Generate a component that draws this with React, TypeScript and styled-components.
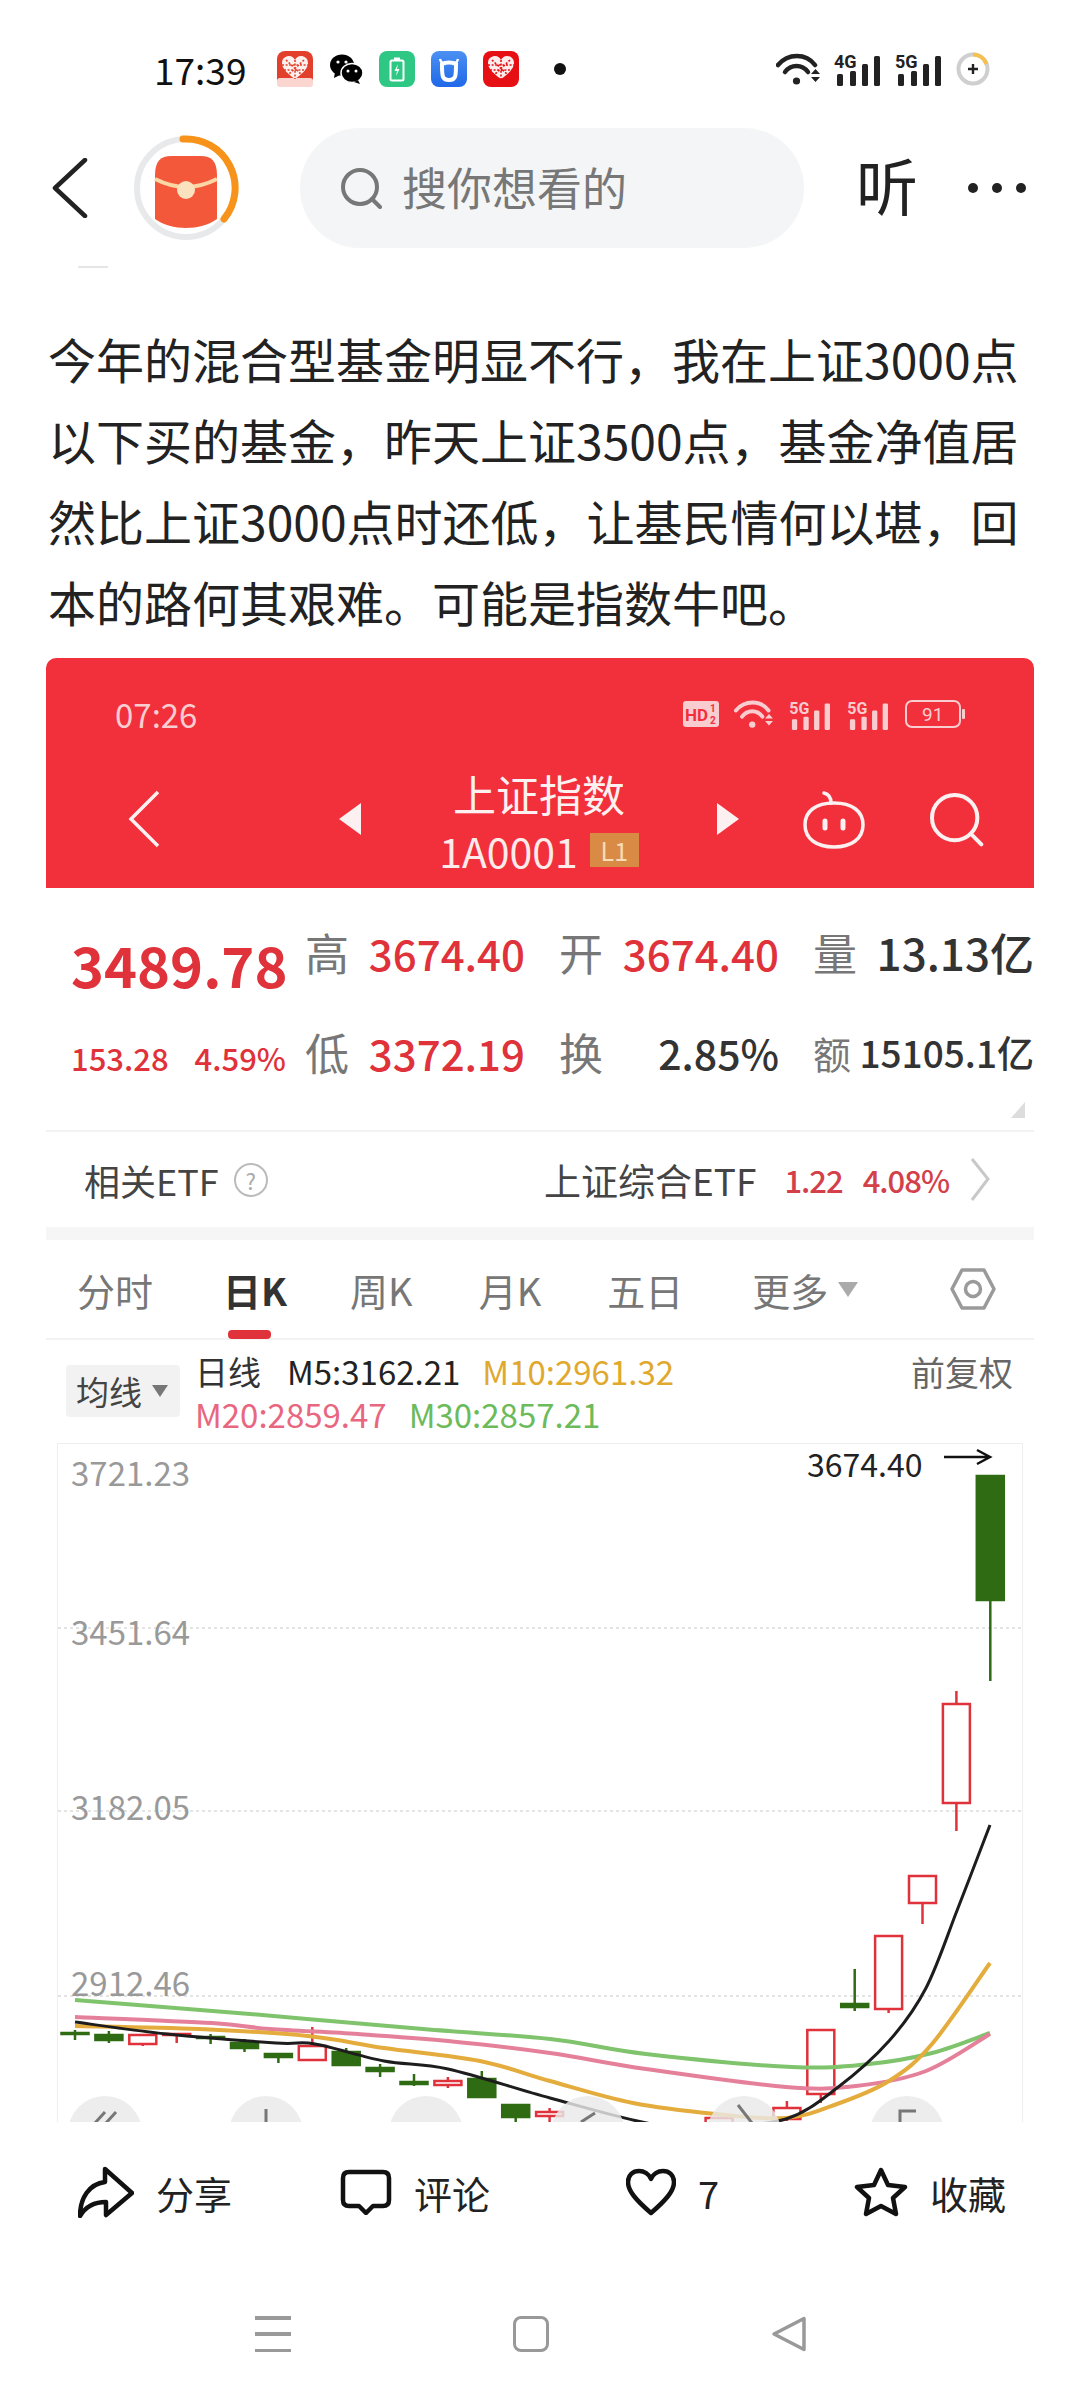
import React from 'react';
import styled, { createGlobalStyle } from 'styled-components';

const RED = '#e0323a';
const GREEN = '#2f6b13';

type Candle = { i: number; up: boolean; high: number; top: number; bottom: number; low: number };

// page-space y values, x comes from the candle index
const CANDLES: Candle[] = [
  { i: 0, up: false, high: 2029, top: 2032, bottom: 2033, low: 2039 },
  { i: 1, up: false, high: 2030, top: 2034, bottom: 2039, low: 2042 },
  { i: 2, up: true, high: 2034, top: 2034, bottom: 2043, low: 2045 },
  { i: 3, up: true, high: 2032, top: 2033, bottom: 2034, low: 2042 },
  { i: 4, up: false, high: 2033, top: 2036, bottom: 2037, low: 2043 },
  { i: 5, up: false, high: 2038, top: 2042, bottom: 2047, low: 2051 },
  { i: 6, up: false, high: 2053, top: 2053, bottom: 2056, low: 2062 },
  { i: 7, up: true, high: 2026, top: 2045, bottom: 2059, low: 2060 },
  { i: 8, up: false, high: 2047, top: 2051, bottom: 2064, low: 2064 },
  { i: 9, up: false, high: 2063, top: 2067, bottom: 2070, low: 2076 },
  { i: 10, up: false, high: 2073, top: 2081, bottom: 2083, low: 2085 },
  { i: 11, up: true, high: 2076, top: 2080, bottom: 2084, low: 2087 },
  { i: 12, up: false, high: 2070, top: 2078, bottom: 2096, low: 2096 },
  { i: 13, up: false, high: 2104, top: 2104, bottom: 2116, low: 2123 },
  { i: 14, up: true, high: 2107, top: 2111, bottom: 2115, low: 2123 },
  { i: 19, up: true, high: 2117, top: 2117, bottom: 2126, low: 2126 },
  { i: 21, up: true, high: 2100, top: 2107, bottom: 2118, low: 2120 },
  { i: 22, up: true, high: 2029, top: 2029, bottom: 2093, low: 2102 },
  { i: 23, up: false, high: 1968, top: 2003, bottom: 2006, low: 2010 },
  { i: 24, up: true, high: 1935, top: 1935, bottom: 2008, low: 2012 },
  { i: 25, up: true, high: 1875, top: 1875, bottom: 1902, low: 1923 },
  { i: 26, up: true, high: 1690, top: 1703, bottom: 1802, low: 1830 },
  { i: 27, up: false, high: 1475, top: 1475, bottom: 1599, low: 1680 },
];

const MA_LINES: { color: string; width: number; points: number[][] }[] = [
  { color: '#7fc36c', width: 4, points: [[75, 1999], [250, 2013], [423, 2028], [550, 2038], [646, 2053], [792, 2066], [869, 2063], [932, 2052], [990, 2032]] },
  { color: '#e5809a', width: 4, points: [[75, 2016], [212, 2022], [270, 2028], [358, 2033], [448, 2040], [550, 2052], [646, 2068], [786, 2086], [856, 2085], [926, 2070], [990, 2033]] },
  { color: '#e4ac3c', width: 4, points: [[75, 2025], [199, 2028], [308, 2035], [384, 2047], [480, 2060], [550, 2080], [633, 2102], [716, 2113], [786, 2117], [837, 2103], [889, 2080], [932, 2043], [990, 1962]] },
  { color: '#1d1d1d', width: 3, points: [[75, 2021], [167, 2033], [276, 2042], [315, 2043], [384, 2060], [448, 2068], [550, 2097], [652, 2123], [716, 2125], [786, 2118], [837, 2087], [889, 2040], [926, 1987], [958, 1907], [990, 1824]] },
];

const AXIS_LABELS = [
  { y: 1473, text: '3721.23' },
  { y: 1632, text: '3451.64' },
  { y: 1807, text: '3182.05' },
  { y: 1983, text: '2912.46' },
];

const TABS = ['分时', '日K', '周K', '月K', '五日'];

const smoothPath = (pts: number[][]) => {
  let d = `M${pts[0][0]} ${pts[0][1]}`;
  for (let i = 0; i < pts.length - 1; i++) {
    const p0 = pts[i - 1] || pts[i];
    const p1 = pts[i];
    const p2 = pts[i + 1];
    const p3 = pts[i + 2] || p2;
    const c1x = p1[0] + (p2[0] - p0[0]) / 6;
    const c1y = p1[1] + (p2[1] - p0[1]) / 6;
    const c2x = p2[0] - (p3[0] - p1[0]) / 6;
    const c2y = p2[1] - (p3[1] - p1[1]) / 6;
    d += ` C${c1x} ${c1y} ${c2x} ${c2y} ${p2[0]} ${p2[1]}`;
  }
  return d;
};

const HeartApp = ({ bg, label }: { bg: string; label?: boolean }) => (
  <svg width="36" height="36" viewBox="0 0 36 36">
    <rect width="36" height="36" rx="8" fill={bg} />
    {label && <rect y="27" width="36" height="9" rx="3" fill="#fbd5cf" />}
    <path d="M18 28 C8 21 5 16 5 12 C5 7 9 5 12 5 C15 5 17 7 18 9 C19 7 21 5 24 5 C27 5 31 7 31 12 C31 16 28 21 18 28Z" fill="#fff" opacity="0.92" />
    <path d="M18 9V28M9 9l16 15M27 9L11 24M5 14h26M7 19h22" stroke={bg} strokeWidth="1.6" strokeDasharray="2 1.6" fill="none" />
  </svg>
);

const WechatIcon = () => (
  <svg width="34" height="30" viewBox="0 0 34 30">
    <ellipse cx="13" cy="11" rx="12" ry="10.5" fill="#000" />
    <path d="M6 18l-1 6 6-3z" fill="#000" />
    <ellipse cx="23" cy="19" rx="11" ry="9.5" fill="#000" stroke="#fff" strokeWidth="1.5" />
    <path d="M29 26l2 4-6-2z" fill="#000" />
    <circle cx="9" cy="8" r="1.6" fill="#fff" />
    <circle cx="17" cy="8" r="1.6" fill="#fff" />
    <circle cx="19" cy="17" r="1.5" fill="#fff" />
    <circle cx="27" cy="17" r="1.5" fill="#fff" />
  </svg>
);

const BatteryApp = () => (
  <svg width="36" height="36" viewBox="0 0 36 36">
    <rect width="36" height="36" rx="8" fill="#2ec884" />
    <rect x="11.5" y="9.5" width="13" height="20" rx="1.5" fill="none" stroke="#fff" strokeWidth="2" />
    <rect x="15" y="6.5" width="6" height="3" fill="#fff" />
    <path d="M19 13l-3.5 7h2.5l-1 5 3.5-7h-2.5z" fill="#fff" />
  </svg>
);

const CowApp = () => (
  <svg width="36" height="36" viewBox="0 0 36 36">
    <defs>
      <linearGradient id="cow" x1="0" y1="0" x2="0" y2="1">
        <stop offset="0" stopColor="#4c90f2" />
        <stop offset="1" stopColor="#1f68e8" />
      </linearGradient>
    </defs>
    <rect width="36" height="36" rx="8" fill="url(#cow)" />
    <path d="M11 13c0 12 0 16 7 16s7-4 7-16c-3-2-11-2-14 0z" fill="none" stroke="#fff" strokeWidth="4" />
    <path d="M9 8c1 4 3 5 6 5M27 8c-1 4-3 5-6 5" fill="none" stroke="#fff" strokeWidth="2.4" />
  </svg>
);

const WifiIcon = ({ color, small }: { color: string; small?: boolean }) => (
  <svg width={small ? 40 : 45} height={small ? 30 : 34} viewBox="0 0 45 34">
    <path d="M2 13C12 1 30 1 39 13" fill="none" stroke={color} strokeWidth="4.5" strokeLinecap="round" />
    <path d="M9 20C15 12 26 12 32 20" fill="none" stroke={color} strokeWidth="4.5" strokeLinecap="round" />
    <circle cx="20.5" cy="29" r="3.6" fill={color} />
    <path d="M35 22h9l-4.5-5zM35 25h9l-4.5 5z" fill={color} />
  </svg>
);

const SignalIcon = ({ label, color, small }: { label: string; color: string; small?: boolean }) => (
  <svg width={small ? 43 : 48} height={small ? 31 : 35} viewBox="0 -3 48 35">
    <text x="0" y="14" fontSize="18" fontWeight="700" fill={color} fontFamily="Roboto, sans-serif">{label}</text>
    <rect x="3" y="20" width="6" height="12" rx="1.5" fill={color} />
    <rect x="16" y="17" width="6" height="15" rx="1.5" fill={color} />
    <rect x="28" y="10" width="6" height="22" rx="1.5" fill={color} />
    <rect x="40" y="2" width="6" height="30" rx="1.5" fill={color} />
  </svg>
);

const ChargeRing = () => (
  <svg width="34" height="34" viewBox="0 0 34 34">
    <circle cx="17" cy="17" r="14.5" fill="none" stroke="#cfcfcf" strokeWidth="4" />
    <path d="M17 2.5A14.5 14.5 0 0 1 30.5 12" fill="none" stroke="#f5c04e" strokeWidth="4" />
    <path d="M12 17h10M17 12v10" stroke="#222" strokeWidth="2.4" />
  </svg>
);

const RedPacket = () => (
  <svg width="106" height="106" viewBox="0 0 106 106">
    <circle cx="53" cy="53" r="49" fill="none" stroke="#e8e9eb" strokeWidth="6" />
    <path d="M50 4A49 49 0 0 1 91 84" fill="none" stroke="#f7931a" strokeWidth="7" strokeLinecap="round" />
    <path d="M22 40c0-14 6-19 16-19h30c10 0 16 5 16 19v44c-8 6-20 9-31 9s-23-3-31-9z" fill="#f4583a" />
    <path d="M22 44c10 5 20 8 31 8s21-3 31-8" fill="none" stroke="#fbd7a5" strokeWidth="4" />
    <circle cx="53" cy="55" r="9" fill="#f9e2bd" />
  </svg>
);

const SearchGlyph = ({ color, size, weight }: { color: string; size: number; weight: number }) => (
  <svg width={size} height={size} viewBox="0 0 42 42">
    <circle cx="20" cy="20" r="17" fill="none" stroke={color} strokeWidth={weight} />
    <path d="M32 32l8 8" stroke={color} strokeWidth={weight} strokeLinecap="round" />
  </svg>
);

const Triangle = ({ flip }: { flip?: boolean }) => (
  <svg width="22" height="32" viewBox="0 0 22 32">
    <path d={flip ? 'M0 0L22 16L0 32Z' : 'M22 0L0 16L22 32Z'} fill="#fdf0f0" />
  </svg>
);

const RobotIcon = () => (
  <svg width="66" height="60" viewBox="0 0 66 60" fill="none" stroke="#fdf0f0" strokeWidth="3.5">
    <path d="M33 14C15 14 4 22 4 36C4 50 16 58 33 58C50 58 62 50 62 36C62 22 51 14 33 14Z" />
    <path d="M30 14C30 8 27 5 23 4" strokeLinecap="round" />
    <path d="M24 32v7M42 32v7" strokeLinecap="round" strokeWidth="5" />
  </svg>
);

const HexIcon = () => (
  <svg width="46" height="44" viewBox="0 0 46 44" fill="none" stroke="#9a9a9a" strokeWidth="3.5">
    <path d="M12 3H34L44 22L34 41H12L2 22Z" strokeLinejoin="round" />
    <circle cx="23" cy="22" r="7.5" />
  </svg>
);

const ShareIcon = () => (
  <svg width="56" height="52" viewBox="0 0 56 52" fill="none" stroke="#111" strokeWidth="4.5" strokeLinejoin="round">
    <path d="M27 3L54 27L28 49V36C17 36 8 40 2 50C2 32 11 18 27 16Z" />
  </svg>
);

const CommentIcon = () => (
  <svg width="52" height="46" viewBox="0 0 52 46" fill="none" stroke="#111" strokeWidth="4.5" strokeLinejoin="round">
    <path d="M9 3H43Q49 3 49 9V31Q49 37 43 37H33L26 44L19 37H9Q3 37 3 31V9Q3 3 9 3Z" />
  </svg>
);

const HeartIcon = () => (
  <svg width="50" height="48" viewBox="0 0 50 48" fill="none" stroke="#111" strokeWidth="4.5" strokeLinejoin="round">
    <path d="M25 45C10 32 2 23 2 14C2 7 7 3 13 3C18 3 23 6 25 11C27 6 32 3 37 3C43 3 48 7 48 14C48 23 40 32 25 45Z" />
  </svg>
);

const StarIcon = () => (
  <svg width="54" height="50" viewBox="0 0 54 50" fill="none" stroke="#111" strokeWidth="4.5" strokeLinejoin="round">
    <path d="M27 3L34 18L51 20L39 31L42 47L27 39L12 47L15 31L3 20L20 18Z" />
  </svg>
);

const StockChart = () => (
  <svg width="964" height="679" viewBox="58 1443 964 679">
    {[1627, 1810, 1995].map((y) => (
      <line key={y} x1="58" x2="1022" y1={y} y2={y} stroke="#e4e4e4" strokeWidth="2" strokeDasharray="3 3" />
    ))}
    {CANDLES.map((c) => {
      const x = 75 + c.i * 33.9;
      const color = c.up ? RED : GREEN;
      return (
        <g key={c.i}>
          <line x1={x} x2={x} y1={c.high} y2={c.low} stroke={color} strokeWidth="2.5" />
          <rect
            x={x - 13.5}
            y={c.top}
            width="27"
            height={Math.max(c.bottom - c.top, 1)}
            fill={c.up ? '#fff' : color}
            stroke={color}
            strokeWidth="2.5"
          />
        </g>
      );
    })}
    {MA_LINES.map((l) => (
      <path key={l.color} d={smoothPath(l.points)} fill="none" stroke={l.color} strokeWidth={l.width} />
    ))}
    {[105, 266, 426, 588, 744, 907].map((x) => (
      <circle key={x} cx={x} cy="2132" r="37" fill="#e9e9e9" fillOpacity="0.82" />
    ))}
    <path d="M95 2122l10-11M106 2122l10-11M266 2108v14M581 2121l14-9M900 2122v-12h16" fill="none" stroke="#777" strokeWidth="3" />
    <path d="M738 2104l14 18" fill="none" stroke="#777" strokeWidth="3" />
    {AXIS_LABELS.map((a) => (
      <AxisText key={a.text} x="71" y={a.y + 12}>{a.text}</AxisText>
    ))}
    <path d="M944 1456H989M977 1449L990 1456L977 1463" fill="none" stroke="#111" strokeWidth="2.5" />
  </svg>
);

export default function App() {
  return (
    <>
      <GlobalStyle />
      <Screen>
        <StatusBar>
          <Clock>17:39</Clock>
          <AppIcons>
            <HeartApp bg="#e2402c" label />
            <WechatIcon />
            <BatteryApp />
            <CowApp />
            <HeartApp bg="#e60f14" />
            <NoticeDot />
          </AppIcons>
          <SystemIcons>
            <WifiIcon color="#222" />
            <SignalIcon label="4G" color="#222" />
            <SignalIcon label="5G" color="#222" />
            <ChargeRing />
          </SystemIcons>
        </StatusBar>

        <TopNav>
          <BackButton>
            <svg width="36" height="60" viewBox="0 0 36 60">
              <path d="M33 2L3 30L33 58" fill="none" stroke="#222" strokeWidth="4.5" strokeLinecap="round" strokeLinejoin="round" />
            </svg>
          </BackButton>
          <RedPacket />
          <SearchPill>
            <SearchGlyph color="#777" size={42} weight={4} />
            <SearchHint>搜你想看的</SearchHint>
          </SearchPill>
          <ListenLabel>听</ListenLabel>
          <MoreDots>
            <i />
            <i />
            <i />
          </MoreDots>
        </TopNav>

        <ScrollHint />

        <PostText>
          今年的混合型基金明显不行，我在上证3000点以下买的基金，昨天上证3500点，基金净值居然比上证3000点时还低，让基民情何以堪，回本的路何其艰难。可能是指数牛吧。
        </PostText>

        <PostImage>
          <RedHeader>
            <RedStatus>
              <RedClock>07:26</RedClock>
              <RedStatusIcons>
                <svg width="36" height="26" viewBox="0 0 36 26">
                  <rect width="36" height="26" rx="3" fill="#f9cdd0" />
                  <text x="2" y="20" fontSize="17" fontWeight="700" fill="#f1303c" fontFamily="Roboto, sans-serif">HD</text>
                  <text x="27" y="11" fontSize="10" fontWeight="700" fill="#f1303c" fontFamily="Roboto, sans-serif">1</text>
                  <text x="27" y="23" fontSize="10" fontWeight="700" fill="#f1303c" fontFamily="Roboto, sans-serif">2</text>
                </svg>
                <WifiIcon color="#f9cdd0" small />
                <SignalIcon label="5G" color="#f9cdd0" small />
                <SignalIcon label="5G" color="#f9cdd0" small />
                <svg width="60" height="28" viewBox="0 0 60 28">
                  <rect x="1" y="1" width="54" height="26" rx="6" fill="none" stroke="#f9cdd0" strokeWidth="2" />
                  <text x="17" y="21" fontSize="19" fill="#f9cdd0" fontFamily="Roboto, sans-serif">91</text>
                  <rect x="57" y="9" width="3" height="10" rx="1" fill="#f9cdd0" />
                </svg>
              </RedStatusIcons>
            </RedStatus>
            <RedNav>
              <RedBack>
                <svg width="32" height="58" viewBox="0 0 32 58">
                  <path d="M30 2L3 29L30 56" fill="none" stroke="#fdf0f0" strokeWidth="3.5" />
                </svg>
              </RedBack>
              <Ticker>
                <Triangle />
                <TickerName>
                  <TickerTitle>上证指数</TickerTitle>
                  <TickerCode>
                    1A0001
                    <LevelBadge>L1</LevelBadge>
                  </TickerCode>
                </TickerName>
                <Triangle flip />
              </Ticker>
              <RobotSlot>
                <RobotIcon />
              </RobotSlot>
              <SearchSlot>
                <SearchGlyph color="#fdf0f0" size={56} weight={3} />
              </SearchSlot>
            </RedNav>
          </RedHeader>

          <StatGrid>
            <PriceCell>
              <Price>3489.78</Price>
            </PriceCell>
            <StatCell>
              <StatLabel>高</StatLabel>
              <StatValue $size={42} $tone={RED}>3674.40</StatValue>
            </StatCell>
            <StatCell>
              <StatLabel>开</StatLabel>
              <StatValue $size={42} $tone={RED}>3674.40</StatValue>
            </StatCell>
            <StatCell>
              <StatLabel>量</StatLabel>
              <StatValue $size={44} $tone="#333">13.13亿</StatValue>
            </StatCell>
            <ChangeCell>
              <Change>153.28</Change>
              <Change>4.59%</Change>
            </ChangeCell>
            <StatCell>
              <StatLabel>低</StatLabel>
              <StatValue $size={42} $tone={RED}>3372.19</StatValue>
            </StatCell>
            <StatCell>
              <StatLabel>换</StatLabel>
              <StatValue $size={41} $tone="#333">2.85%</StatValue>
            </StatCell>
            <StatCell>
              <StatLabel $small>额</StatLabel>
              <StatValue $size={37} $tone="#333">15105.1亿</StatValue>
            </StatCell>
            <CornerMark />
          </StatGrid>

          <EtfRow>
            <EtfName>相关ETF</EtfName>
            <HelpMark>?</HelpMark>
            <EtfLink>上证综合ETF</EtfLink>
            <EtfQuote>1.22</EtfQuote>
            <EtfQuote>4.08%</EtfQuote>
            <svg width="20" height="45" viewBox="0 0 20 45">
              <path d="M2 2L18 22L2 43" fill="none" stroke="#c8c8c8" strokeWidth="3" />
            </svg>
          </EtfRow>

          <TabBar>
            {TABS.map((tab) => (
              <Tab key={tab} $active={tab === '日K'}>{tab}</Tab>
            ))}
            <Tab>
              更多
              <TabCaret />
            </Tab>
            <HexSlot>
              <HexIcon />
            </HexSlot>
          </TabBar>

          <LegendRow>
            <MaSelect>
              均线
              <SelectCaret />
            </MaSelect>
            <LegendLines>
              <LegendLine>
                <LegendTitle>日线</LegendTitle>
                <MaValue $tone="#222">M5:3162.21</MaValue>
                <MaValue $tone="#e0a92e">M10:2961.32</MaValue>
              </LegendLine>
              <LegendLine>
                <MaValue $tone="#e8677f">M20:2859.47</MaValue>
                <MaValue $tone="#6cbb5a">M30:2857.21</MaValue>
              </LegendLine>
            </LegendLines>
            <AdjustLabel>前复权</AdjustLabel>
          </LegendRow>

          <ChartFrame>
            <LastPrice>3674.40</LastPrice>
            <StockChart />
          </ChartFrame>
        </PostImage>

        <ActionBar>
          <Action>
            <ShareIcon />
            分享
          </Action>
          <Action>
            <CommentIcon />
            评论
          </Action>
          <Action>
            <HeartIcon />
            7
          </Action>
          <Action>
            <StarIcon />
            收藏
          </Action>
        </ActionBar>

        <SystemNav>
          <MenuKey>
            <i />
            <i />
            <i />
          </MenuKey>
          <HomeKey />
          <svg width="36" height="36" viewBox="0 0 36 36">
            <path d="M33 2.5V33.5L3 18Z" fill="none" stroke="#999" strokeWidth="3.5" strokeLinejoin="round" />
          </svg>
        </SystemNav>
      </Screen>
    </>
  );
}

const GlobalStyle = createGlobalStyle`
  * {
    box-sizing: border-box;
  }
  body {
    margin: 0;
    background: #fff;
    font-family: "Noto Sans CJK SC", "Noto Sans", sans-serif;
  }
`;

const Screen = styled.div`
  width: 1080px;
  height: 2400px;
  overflow: hidden;
  display: flex;
  flex-direction: column;
  background: #fff;
  color: #222;
`;

const StatusBar = styled.div`
  height: 128px;
  padding: 51px 90px 0 154px;
  display: flex;
  align-items: flex-start;
`;

const Clock = styled.span`
  width: 123px;
  font-size: 37px;
  line-height: 36px;
  color: #111;
`;

const AppIcons = styled.div`
  display: flex;
  align-items: center;
  gap: 16px;
`;

const NoticeDot = styled.span`
  width: 12px;
  height: 12px;
  margin-left: 19px;
  border-radius: 50%;
  background: #111;
`;

const SystemIcons = styled.div`
  margin-left: auto;
  display: flex;
  align-items: center;
  gap: 13px;
`;

const TopNav = styled.div`
  height: 120px;
  padding-left: 52px;
  display: flex;
  align-items: center;
`;

const BackButton = styled.div`
  width: 81px;
  display: flex;
`;

const SearchPill = styled.div`
  width: 504px;
  height: 120px;
  margin-left: 61px;
  padding-left: 40px;
  display: flex;
  align-items: center;
  gap: 20px;
  border-radius: 60px;
  background: #f3f5f6;
`;

const SearchHint = styled.span`
  padding-bottom: 3px;
  font-size: 45px;
  color: #777;
`;

const ListenLabel = styled.span`
  margin-left: 52px;
  padding-bottom: 8px;
  font-size: 62px;
  color: #222;
`;

const MoreDots = styled.div`
  margin-left: 50px;
  display: flex;
  gap: 14px;

  i {
    width: 10px;
    height: 10px;
    border-radius: 50%;
    background: #222;
  }
`;

const ScrollHint = styled.div`
  width: 30px;
  height: 2px;
  margin: 18px 0 50px 78px;
  background: #e6e6e6;
`;

const PostText = styled.p`
  margin: 0 44px 16px 48px;
  font-size: 48px;
  line-height: 81px;
  color: #222;
`;

const PostImage = styled.div`
  width: 988px;
  height: 1464px;
  margin-left: 46px;
  flex-shrink: 0;
  overflow: hidden;
  border-radius: 10px 10px 0 0;
  background: #fff;
`;

const RedHeader = styled.div`
  height: 230px;
  background: #f1303c;
`;

const RedStatus = styled.div`
  height: 116px;
  padding: 0 69px 4px;
  display: flex;
  align-items: center;
  justify-content: space-between;
`;

const RedClock = styled.span`
  font-size: 33px;
  color: #f9cdd0;
`;

const RedStatusIcons = styled.div`
  display: flex;
  align-items: center;
  gap: 15px;
`;

const RedNav = styled.div`
  height: 114px;
  padding: 0 0 24px 82px;
  display: flex;
  align-items: center;
`;

const RedBack = styled.div`
  display: flex;
`;

const Ticker = styled.div`
  width: 400px;
  height: 90px;
  margin-left: 179px;
  display: flex;
  align-items: center;
  justify-content: space-between;
`;

const TickerName = styled.div`
  align-self: flex-start;
  display: flex;
  flex-direction: column;
  align-items: center;
`;

const TickerTitle = styled.span`
  margin-top: -4px;
  font-size: 43px;
  line-height: 46px;
  color: #fdf0f0;
`;

const TickerCode = styled.span`
  height: 68px;
  display: flex;
  align-items: center;
  gap: 12px;
  font-size: 41px;
  color: #fdeaea;
`;

const LevelBadge = styled.span`
  width: 49px;
  height: 34px;
  display: flex;
  align-items: center;
  justify-content: center;
  font-size: 25px;
  color: #f7dcb8;
  background: #d98b45;
`;

const RobotSlot = styled.div`
  margin-left: 62px;
  display: flex;
`;

const SearchSlot = styled.div`
  margin-left: 61px;
  display: flex;
`;

const StatGrid = styled.div`
  position: relative;
  height: 242px;
  padding: 14px 0 28px 25px;
  display: grid;
  grid-template-columns: 234px 254px 254px 221px;
  grid-auto-rows: 100px;
`;

const PriceCell = styled.div`
  padding-top: 22px;
  display: flex;
  align-items: center;
`;

const Price = styled.span`
  font-size: 56px;
  font-weight: 700;
  color: ${RED};
`;

const ChangeCell = styled.div`
  padding-top: 10px;
  display: flex;
  align-items: center;
  gap: 26px;
`;

const Change = styled.span`
  font-size: 31px;
  font-weight: 500;
  color: ${RED};
`;

const StatCell = styled.div`
  padding-right: 34px;
  display: flex;
  align-items: center;
  justify-content: space-between;
  white-space: nowrap;

  &:nth-child(4),
  &:nth-child(8) {
    padding-right: 0;
  }
`;

const StatLabel = styled.span<{ $small?: boolean }>`
  font-size: ${(p) => (p.$small ? 38 : 44)}px;
  color: #777;
`;

const StatValue = styled.span<{ $size: number; $tone: string }>`
  font-size: ${(p) => p.$size}px;
  font-weight: 500;
  color: ${(p) => p.$tone};
`;

const CornerMark = styled.span`
  position: absolute;
  right: 9px;
  bottom: 12px;
  width: 0;
  height: 0;
  border-left: 14px solid transparent;
  border-bottom: 16px solid #ddd;
`;

const EtfRow = styled.div`
  height: 110px;
  padding: 0 44px 0 38px;
  display: flex;
  align-items: center;
  border-top: 2px solid #f3f3f3;
  border-bottom: 13px solid #f6f6f6;
`;

const EtfName = styled.span`
  font-size: 36px;
  color: #444;
`;

const HelpMark = styled.span`
  width: 34px;
  height: 34px;
  margin-left: 15px;
  display: flex;
  align-items: center;
  justify-content: center;
  border: 2px solid #bbb;
  border-radius: 50%;
  font-size: 22px;
  color: #aaa;
`;

const EtfLink = styled.span`
  margin-left: auto;
  margin-right: 8px;
  font-size: 37px;
  color: #444;
`;

const EtfQuote = styled.span`
  margin-left: 20px;
  font-size: 31px;
  font-weight: 500;
  letter-spacing: -1px;
  color: #d3404a;

  &:last-of-type {
    margin-right: 21px;
  }
`;

const TabBar = styled.div`
  height: 100px;
  padding: 0 38px 0 31px;
  display: flex;
  align-items: center;
  gap: 66px;
  border-bottom: 2px solid #f3f3f3;
`;

const Tab = styled.span<{ $active?: boolean }>`
  position: relative;
  display: flex;
  align-items: center;
  margin-right: ${(p) => (p.$active ? -3 : 0)}px;
  font-size: 38px;
  font-weight: ${(p) => (p.$active ? 700 : 400)};
  color: ${(p) => (p.$active ? '#333' : '#777')};

  &:first-child {
    margin-right: 4px;
  }

  &:nth-child(6) {
    margin-left: 3px;
  }

  &::after {
    content: '';
    display: ${(p) => (p.$active ? 'block' : 'none')};
    position: absolute;
    left: 5px;
    right: 16px;
    bottom: -22px;
    height: 9px;
    border-radius: 4px;
    background: ${RED};
  }
`;

const TabCaret = styled.i`
  width: 0;
  height: 0;
  margin-left: 10px;
  border-left: 10px solid transparent;
  border-right: 10px solid transparent;
  border-top: 15px solid #aaa;
`;

const HexSlot = styled.div`
  margin-left: auto;
  display: flex;
`;

const LegendRow = styled.div`
  height: 103px;
  padding: 10px 21px 0 20px;
  display: flex;
  align-items: flex-start;
`;

const MaSelect = styled.div`
  width: 114px;
  height: 52px;
  margin-top: 15px;
  padding-left: 10px;
  display: flex;
  align-items: center;
  border-radius: 4px;
  background: #f2f2f2;
  font-size: 33px;
  line-height: 40px;
  color: #444;
`;

const SelectCaret = styled.i`
  width: 0;
  height: 0;
  margin-left: 10px;
  border-left: 8px solid transparent;
  border-right: 8px solid transparent;
  border-top: 12px solid #777;
`;

const LegendLines = styled.div`
  margin-left: 15px;
  display: flex;
  flex-direction: column;
`;

const LegendLine = styled.div`
  height: 43px;
  display: flex;
  align-items: center;
  gap: 22px;
  line-height: 43px;
`;

const LegendTitle = styled.span`
  margin-right: 4px;
  font-size: 33px;
  color: #333;
`;

const MaValue = styled.span<{ $tone: string }>`
  font-size: 33px;
  color: ${(p) => p.$tone};
`;

const AdjustLabel = styled.span`
  margin-left: auto;
  line-height: 44px;
  font-size: 34px;
  color: #666;
`;

const ChartFrame = styled.div`
  position: relative;
  width: 966px;
  margin-left: 11px;
  border: 1px solid #eee;
  border-bottom: none;
`;

const AxisText = styled.text`
  font-size: 33px;
  fill: #999;
`;

const LastPrice = styled.span`
  position: absolute;
  top: 3px;
  left: 749px;
  font-size: 32px;
  line-height: 32px;
  color: #222;
`;

const ActionBar = styled.div`
  height: 148px;
  padding: 0 0 8px 78px;
  display: grid;
  grid-template-columns: 262px 286px 228px 1fr;
  align-items: center;
`;

const Action = styled.div`
  display: flex;
  align-items: center;
  gap: 22px;
  font-size: 38px;
  color: #222;
`;

const SystemNav = styled.div`
  height: 130px;
  padding: 0 18px 2px 0;
  display: flex;
  align-items: center;
  justify-content: center;
  gap: 222px;
`;

const MenuKey = styled.div`
  width: 36px;
  height: 36px;
  display: flex;
  flex-direction: column;
  justify-content: space-between;

  i {
    display: block;
    height: 3.5px;
    background: #999;
  }
`;

const HomeKey = styled.div`
  width: 36px;
  height: 36px;
  border: 3.5px solid #999;
  border-radius: 8px;
`;
